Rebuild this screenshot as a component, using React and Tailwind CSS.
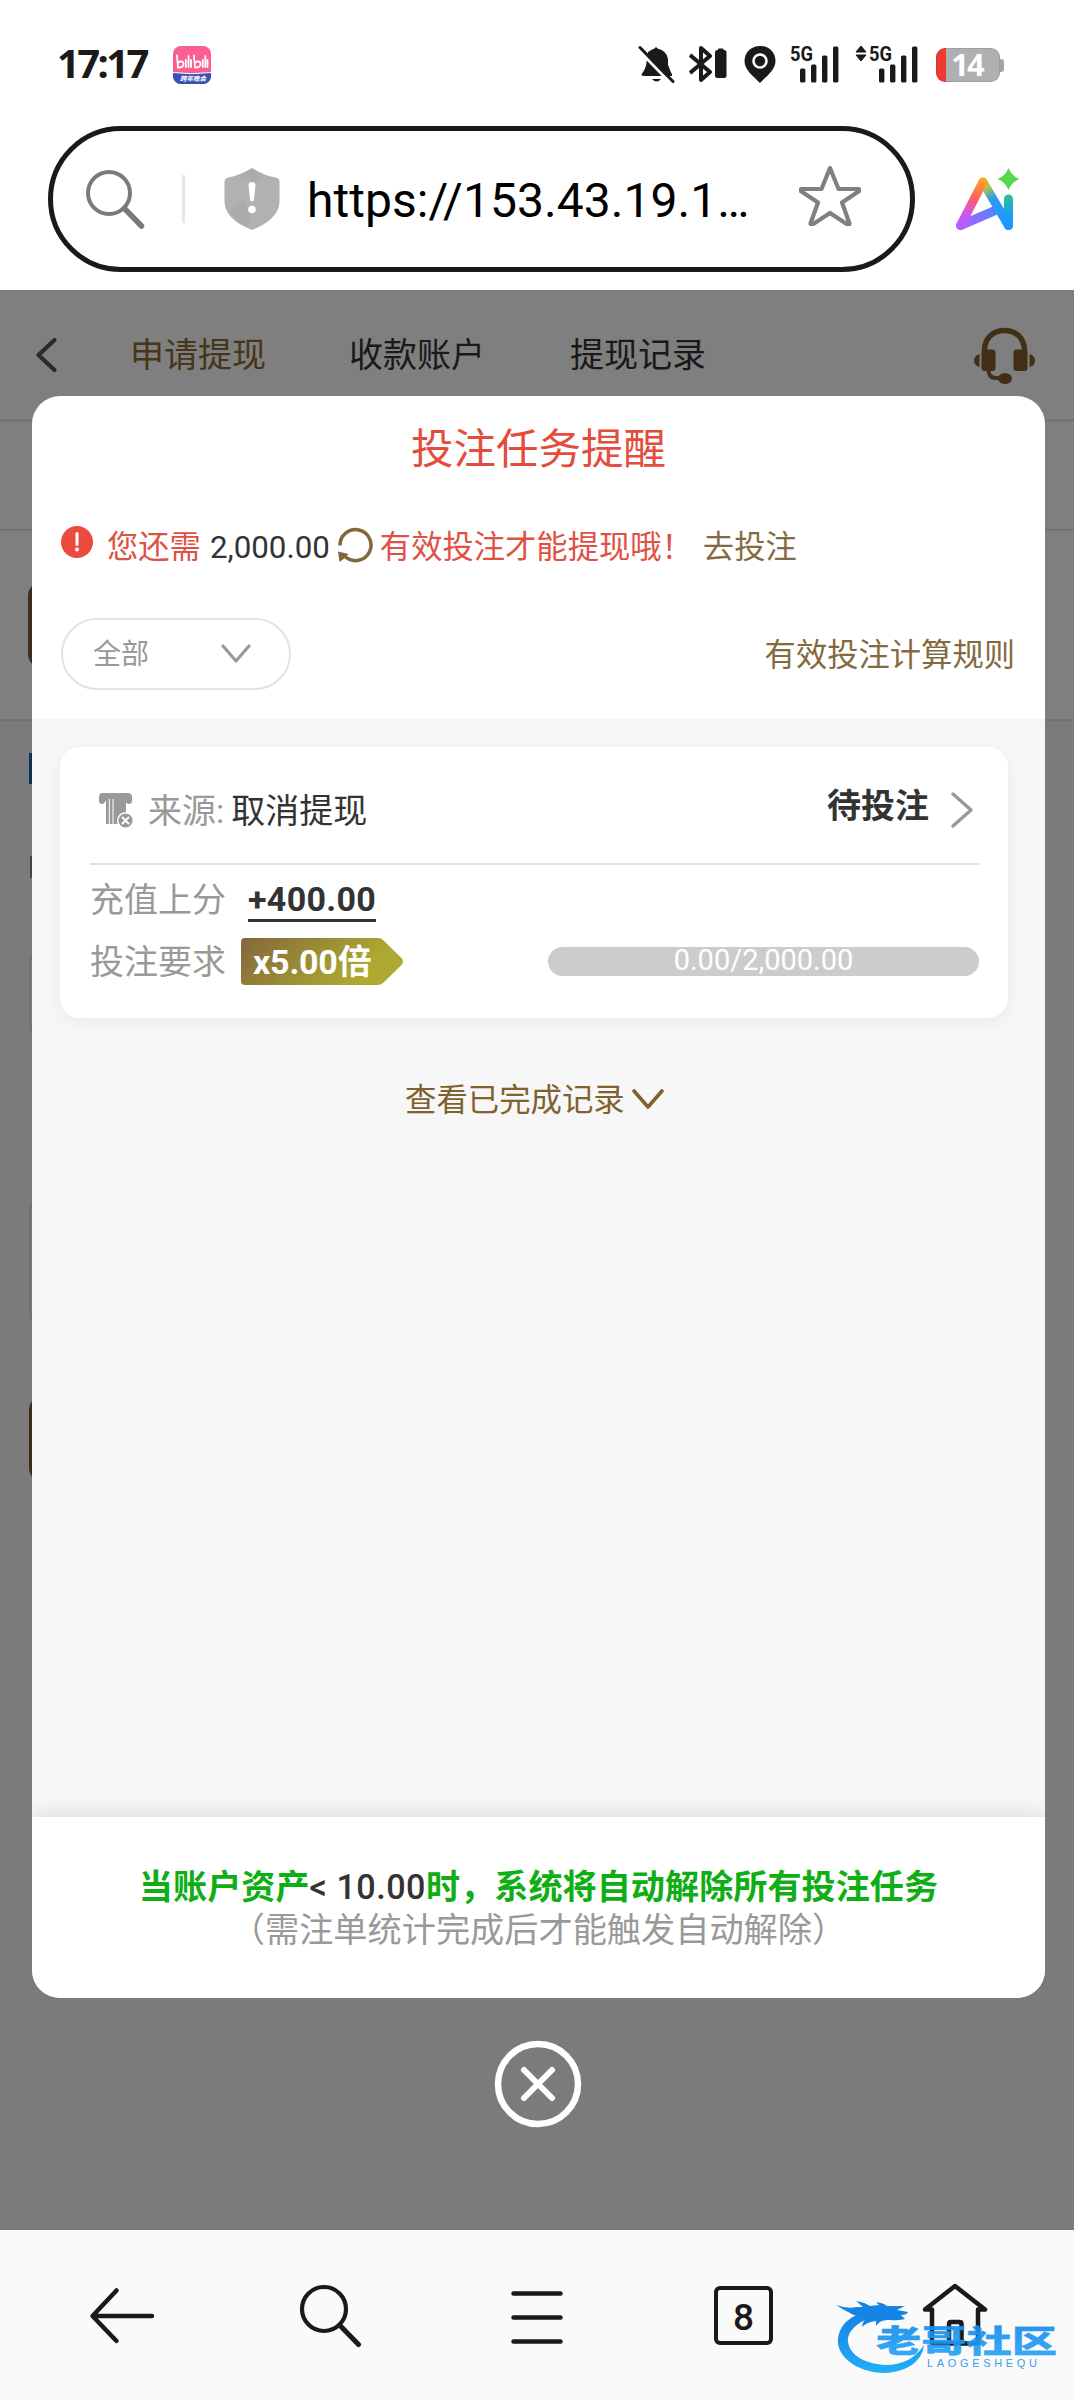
import React from "react";

function Signal({ arrows }) {
  return (
    <svg className="overflow-visible" width={arrows ? 62 : 50} height="38" viewBox={arrows ? "-13 0 62 38" : "0 0 50 38"} fill="#1a1a1a">
      {arrows && <path d="M-8 1l5 6h-10zM-8 16l5-6h-10z" stroke="#1a1a1a" strokeWidth="1" strokeLinejoin="round" />}
      <text x="0" y="16" fontFamily="Roboto, sans-serif" fontWeight="700" fontSize="20.500" textLength="23" lengthAdjust="spacingAndGlyphs">5G</text>
      <rect x="10" y="23.500" width="5.4" height="14" rx="1.5" />
      <rect x="21" y="19.500" width="5.4" height="18" rx="1.5" />
      <rect x="32" y="10.500" width="5.4" height="27" rx="1.5" />
      <rect x="43" y="1.500" width="5.4" height="36" rx="1.5" />
    </svg>
  );
}

function StatusBar() {
  return (
    <div className="flex h-[126px] items-start pl-[57px] pt-[45px]">
      <span className="-mt-[2px] w-[93px] whitespace-nowrap font-['Noto_Sans',sans-serif] text-[40px] font-bold leading-[40px] tracking-[-2.6px] text-[#1a1a1a]">17:17</span>
      <svg className="ml-[23px] mt-px" width="38" height="38" viewBox="0 0 38 38">
        <defs>
          <clipPath id="app"><rect width="38" height="38" rx="8" /></clipPath>
        </defs>
        <g clipPath="url(#app)">
          <rect width="38" height="38" fill="#fb5f92" />
          <path d="M0 26q19 3 38 0v12H0z" fill="#3a50b4" />
          <path d="M0 26.5q19 2.500 38 0" stroke="#fff" strokeWidth="1" fill="none" />
        </g>
        <g stroke="#fff" strokeWidth="1.8" fill="none" strokeLinecap="round">
          <path d="M4 9.500l1 12c4 0 6-1.500 5.500-4s-3-2.500-5-1M21 9.500l1 12c4 0 6-1.500 5.500-4s-3-2.500-5-1" />
          <path d="M12.800 14v7M15.500 10v11M18 14v7M29.800 14v7M32.300 10v11M34.500 14v7" />
        </g>
        <text x="7" y="34.500" fill="#fff" fontFamily="'Noto Sans CJK SC', sans-serif" fontWeight="700" fontStyle="italic" fontSize="6.500">跨年晚会</text>
      </svg>
      <div className="ml-[427px] flex items-start">
        <svg width="38" height="38" viewBox="0 0 38 38" fill="#1a1a1a">
          <path d="M10 7q4-3 6.500-3.500 1.500-2.500 3 0Q29 6 30 14v6l3 7.500q1.500 1 1 3.500H6q-3.500 0-2-2.500 4-5 4.500-11z" />
          <path d="M14 34h9q-4.500 5-9 0z" />
          <path d="M1 5.500l32 33" stroke="#fff" strokeWidth="3" />
          <path d="M2 2.500l33 34" stroke="#1a1a1a" strokeWidth="3" strokeLinecap="round" />
        </svg>
        <svg className="ml-[13px]" width="38" height="38" viewBox="0 0 38 38" fill="none" stroke="#1a1a1a" strokeWidth="4">
          <path d="M1 10l20 17-9 8V3l9 8L1 28" strokeLinejoin="round" />
          <rect x="26" y="5" width="11.500" height="28" rx="2.500" fill="#1a1a1a" stroke="none" />
          <rect x="29" y="3.500" width="5.500" height="3" rx="1" fill="#1a1a1a" stroke="none" />
        </svg>
        <svg className="ml-[17px]" width="32" height="38" viewBox="0 0 32 38">
          <path d="M16 1C7 1 .5 7.500.5 16c0 8.500 8 14.500 15.500 22C23.500 30.500 31.500 24.500 31.500 16 31.500 7.500 25 1 16 1z" fill="#1a1a1a" />
          <circle cx="16" cy="16" r="6.500" fill="#1a1a1a" stroke="#fff" strokeWidth="2.600" />
        </svg>
        <div className="ml-[14px]"><Signal /></div>
        <div className="ml-[16px]"><Signal arrows /></div>
        <div className="ml-[18px] mt-[3px] flex items-center">
          <div className="flex h-[34px] w-[64px] items-center justify-center rounded-[9px] bg-[#b0b0b0] bg-linear-to-r from-[#ee3a31] from-[15%] to-[#b0b0b0] to-[15%] pr-[2px] font-['Noto_Sans',sans-serif] text-[31px] font-bold leading-[32px] tracking-[-2px] text-white ring-1 ring-inset ring-black/10"><span className="-mt-[2px]">14</span></div>
          <div className="h-[13px] w-[4px] rounded-r-[3px] bg-[#a4a4a4]" />
        </div>
      </div>
    </div>
  );
}

function AddressBar() {
  return (
    <div className="flex h-[164px] items-start pl-[48px]">
      <div className="flex h-[146px] w-[867px] items-center rounded-full border-[5px] border-[#1a1a1a] pl-[33px]">
        <svg width="60" height="62" viewBox="0 0 60 62" fill="none" stroke="#7a7a7a" strokeLinecap="round">
          <circle cx="23" cy="25" r="21" strokeWidth="4" />
          <path d="M38.500 40.500L55.500 58" strokeWidth="5.500" />
        </svg>
        <div className="ml-[36px] h-[48px] w-[3px] bg-[#e6e6e6]" />
        <svg className="ml-[39px]" width="56" height="64" viewBox="0 0 56 64">
          <path d="M28 1Q41 9 52 10.500q3.500 1 3.500 4V34C55.500 48 43 57 28 63 13 57 .5 48 .5 34V14.500q0-3 3.500-4Q15 9 28 1z" fill="#b1b1b1" />
          <path d="M28 1q-8 5-14 7 12 3 18 10l6-11Q32 4 28 1zM20 35q-10 0-13 12 5 7 16 13l4-10z" fill="#a6a6a6" opacity=".5" />
          <path d="M24.500 18q0-3 3.500-3t3.500 3l-1.500 15q-2 3-4 0z" fill="#fff" />
          <circle cx="28" cy="42.500" r="3.800" fill="#fff" />
        </svg>
        <span className="ml-[27px] mt-[3px] w-[445px] whitespace-nowrap font-['Roboto',sans-serif] text-[48px] leading-[60px] tracking-[0.05px] text-black">https://153.43.19.1…</span>
        <svg className="-mt-[7px] ml-[47px]" width="62" height="60" viewBox="1 1 62 60" fill="none" stroke="#808080" strokeWidth="4.200" strokeLinejoin="round">
          <path d="M32 3l8.500 21h20.500q1 1.500-.5 2.500L44 37.500l7.500 21q-.5 1.500-2 1L32 48 14.500 59.500q-1.500.5-2-1L20 37.500 3.500 26.500Q2 25.500 3 24h20.500z" />
        </svg>
      </div>
      <svg className="ml-[40px] mt-[41px]" width="66" height="66" viewBox="0 0 66 66" fill="none">
        <defs>
          <linearGradient id="aiA" x1="28" y1="10" x2="6" y2="60" gradientUnits="userSpaceOnUse">
            <stop stopColor="#ffac1c" /><stop offset=".45" stopColor="#ff5b6d" /><stop offset=".75" stopColor="#c957f1" /><stop offset="1" stopColor="#b35fff" />
          </linearGradient>
          <linearGradient id="aiB" x1="27" y1="12" x2="54" y2="60" gradientUnits="userSpaceOnUse">
            <stop stopColor="#ffac1c" /><stop offset=".2" stopColor="#9fc454" /><stop offset=".4" stopColor="#2d9bf0" /><stop offset="1" stopColor="#1e96ff" />
          </linearGradient>
          <linearGradient id="aiC" x1="8" y1="58" x2="42" y2="44" gradientUnits="userSpaceOnUse">
            <stop stopColor="#b65cff" /><stop offset="1" stopColor="#4a86ff" />
          </linearGradient>
          <linearGradient id="aiD" x1="0" y1="30" x2="0" y2="60" gradientUnits="userSpaceOnUse">
            <stop stopColor="#22c39a" /><stop offset=".6" stopColor="#1e9bf5" /><stop offset="1" stopColor="#1e96ff" />
          </linearGradient>
        </defs>
        <g strokeWidth="9" strokeLinecap="round" strokeLinejoin="round">
          <path d="M5.500 58.500L39 44" stroke="url(#aiC)" />
          <path d="M28 15L53.500 58.500" stroke="url(#aiB)" />
          <path d="M53.500 32v26.500" stroke="url(#aiD)" />
          <path d="M5.500 58.500L28 15" stroke="url(#aiA)" />
        </g>
        <path d="M53.500 1q3 8 11 11-8 3-11 11-3-8-11-11 8-3 11-11z" fill="#55d84d" />
      </svg>
    </div>
  );
}

function PageBehind() {
  return (
    <div className="flex h-[1940px] flex-col">
      <div className="flex h-[132px] shrink-0 items-start border-b-[3px] border-[#e4e4e4] bg-white pl-[35px] text-[34px] leading-[44px] text-[#333]">
        <svg className="mt-[47px]" width="23" height="36" viewBox="0 0 23 36" fill="none" stroke="#555" strokeWidth="4.200" strokeLinecap="round" strokeLinejoin="round">
          <path d="M19.500 3L3.500 18l16 15" />
        </svg>
        <span className="ml-[72px] mt-[43px] text-[#8a6a33]">申请提现</span>
        <span className="ml-[83px] mt-[43px]">收款账户</span>
        <span className="ml-[85px] mt-[43px]">提现记录</span>
        <svg className="ml-[267px] mt-[37px]" width="64" height="58" viewBox="0 0 64 58" fill="#84602c">
          <path d="M11.500 24C11.500 10 21 3.500 31.500 3.500S51.500 10 51.500 24" fill="none" stroke="#84602c" strokeWidth="5.500" />
          <rect x="8.500" y="22.500" width="14" height="21.500" rx="3" />
          <rect x="40.500" y="22.500" width="14" height="21.500" rx="3" />
          <path d="M6.500 27v13Q1 38.500 1 33.500T6.500 27zM56.500 27v13q5.500-1.500 5.500-6.500T56.500 27z" />
          <path d="M15.500 43q0 8 8 8h7" fill="none" stroke="#84602c" strokeWidth="4" />
          <ellipse cx="32" cy="51.500" rx="7" ry="5.500" />
        </svg>
      </div>
      <div className="flex h-[109px] shrink-0 items-center border-b-2 border-[#e4e4e4] bg-white pl-[31px] text-[30px] text-[#333]">充值</div>
      <div className="flex h-[190px] shrink-0 items-center border-b-2 border-[#e4e4e4] bg-white pl-[28px]">
        <div className="h-[86px] w-[300px] rounded-[14px] bg-[#755a3a]" />
      </div>
      <div className="flex grow flex-col bg-[#f7f7f7] pl-[29px]">
        <div className="mt-[32px] h-[31px] w-[8px] bg-[#1d5fa8]" />
        <div className="ml-px mt-[72px] h-[22px] w-[40px] border-l-2 border-[#888]" />
        <div className="mt-[71px] h-[90px] w-[600px] rounded-[14px] border-2 border-[#e4e4e4]" />
        <div className="mt-[157px] h-[130px] w-[600px] rounded-[14px] border-2 border-[#e0e0e0]" />
        <div className="mt-[70px] h-[86px] w-[600px] rounded-[14px] bg-[#755a3a]" />
      </div>
    </div>
  );
}

function TaskCard() {
  return (
    <div className="h-[271px] w-[948px] rounded-[20px] bg-white pl-[30px] pr-[29px] text-[34px] text-[#999] shadow-[0_4px_18px_rgba(0,0,0,0.06)]">
      <div className="flex h-[118px] items-center border-b-2 border-[#e1e1e1] pl-[8px] pt-[8px]">
        <svg className="mt-px" width="36" height="36" viewBox="0 0 36 36" fill="#999">
          <path d="M5 1h25q4 0 4 4v4q0 3-3 3t-3-3H7q0 3-3 3T1 9V5q0-4 4-4z" />
          <path d="M8 7h20v17L20 32H8z" />
          <path d="M11.300 7v25M15 7v25" stroke="#fff" strokeWidth="1" />
          <circle cx="27.500" cy="28.500" r="7.800" stroke="#fff" strokeWidth="1.500" />
          <path d="M24.500 25.500l6 6m0-6l-6 6" stroke="#fff" strokeWidth="2" strokeLinecap="round" />
        </svg>
        <span className="ml-[14px] mt-[3px] leading-[44px]">来源:</span>
        <span className="ml-[7px] mt-[3px] leading-[44px] text-[#333]">取消提现</span>
        <span className="-mt-[6px] ml-auto mr-[21px] font-bold leading-[44px] text-[#333]">待投注</span>
        <svg className="mr-[5px] mt-px" width="24" height="38" viewBox="0 0 24 38" fill="none" stroke="#999" strokeWidth="3.400" strokeLinecap="round" strokeLinejoin="round">
          <path d="M3 3l18 16L3 35" />
        </svg>
      </div>
      <div className="flex h-[70px] items-center">
        <span className="leading-[44px]">充值上分</span>
        <span className="ml-[22px] mt-px border-b-[3px] border-[#333] pb-px font-bold leading-[38px] tracking-[0.3px] text-[#333]">+400.00</span>
      </div>
      <div className="flex h-[53px] items-center">
        <span className="leading-[44px]">投注要求</span>
        <div className="relative ml-[15px] flex h-[47px] w-[163px] items-center pl-[12px] leading-[44px]">
          <svg className="absolute inset-0" width="163" height="47" viewBox="0 0 163 47">
            <defs>
              <linearGradient id="tag" x1="0" y1="0" x2="1" y2=".3">
                <stop stopColor="#84673b" /><stop offset=".9" stopColor="#aea932" />
              </linearGradient>
            </defs>
            <path d="M4 0h133q3 0 5 2l18.500 18q3 3.500 0 7l-18.500 18q-2 2-5 2H4q-4 0-4-4V4q0-4 4-4z" fill="url(#tag)" />
          </svg>
          <span className="relative whitespace-nowrap font-bold tracking-[-0.2px] text-white">x5.00倍</span>
        </div>
        <div className="-mt-px ml-auto flex h-[29px] w-[431px] items-center justify-center rounded-full bg-[#ccc] text-[29px] leading-[26px] text-white"><span className="-mt-[2px]">0.00/2,000.00</span></div>
      </div>
    </div>
  );
}

function Dialog() {
  return (
    <section className="flex h-[1602px] w-[1013px] flex-col overflow-hidden rounded-[28px] bg-white">
      <header className="h-[323px] shrink-0">
        <h1 className="h-[104px] pt-[2px] text-center text-[42.500px] leading-[104px] text-[#e34d3d]">投注任务提醒</h1>
        <div className="flex h-[90px] items-center whitespace-nowrap pl-[28px] pt-[5px] text-[31.300px] leading-[44px] text-[#e05043]">
          <svg className="-mt-[12px]" width="34" height="34" viewBox="0 0 34 34">
            <circle cx="17" cy="17" r="16" fill="#ea4b3e" />
            <path d="M17 8.500v11" stroke="#fff" strokeWidth="3" strokeLinecap="round" />
            <circle cx="17" cy="24.500" r="2" fill="#fff" />
          </svg>
          <span className="ml-[13px]">您还需</span>
          <span className="ml-[9px] text-[#333]">2,000.00</span>
          <svg className="-mt-[6px] ml-[7px]" width="36" height="36" viewBox="0 0 36 36">
            <path d="M3 18.500A15.500 15.500 0 1 1 8.500 30" fill="none" stroke="#80683a" strokeWidth="3.500" />
            <path d="M1 24.500l10.500 2.500-3 3.500L2.500 35z" fill="#80683a" />
          </svg>
          <span className="ml-[7px]">有效投注才能提现哦！</span>
          <span className="ml-[10px] text-[#856a3f]">去投注</span>
        </div>
        <div className="mt-[28px] flex h-[72px] items-center justify-between pl-[29px] pr-[30px]">
          <div className="flex h-[72px] w-[230px] items-center justify-between rounded-full border-[2.500px] border-[#e3e3e3] pl-[30px] pr-[37px] text-[28px] leading-[36px] text-[#999]">
            <span className="mt-[2px]">全部</span>
            <svg width="32" height="20" viewBox="0 0 32 20" fill="none" stroke="#999" strokeWidth="3.200" strokeLinecap="round" strokeLinejoin="round">
              <path d="M3 2l13 15L29 2" />
            </svg>
          </div>
          <span className="mt-[3px] text-[31.300px] leading-[44px] text-[#856a3f]">有效投注计算规则</span>
        </div>
      </header>
      <main className="flex grow flex-col bg-[#f7f7f7] pl-[28px] pt-[28px]">
        <TaskCard />
        <div className="ml-[345px] mt-[61px] flex h-[40px] items-center text-[31.400px] leading-[40px] text-[#80622f]">
          <span className="mt-[3px]">查看已完成记录</span>
          <svg className="ml-[6px]" width="34" height="22" viewBox="0 0 34 22" fill="none" stroke="#80622f" strokeWidth="3.600" strokeLinecap="round" strokeLinejoin="round">
            <path d="M3 3l14 16L31 3" />
          </svg>
        </div>
      </main>
      <footer className="h-[181px] shrink-0 bg-white pt-[49px] text-center text-[34px] leading-[43px] shadow-[0_0_22px_rgba(0,0,0,0.14)]">
        <p className="text-[34.150px] font-bold text-[#0fae15]">当账户资产<span className="font-medium tracking-[0.5px] text-[#333]">&lt; 10.00</span>时，系统将自动解除所有投注任务</p>
        <p className="text-[34.200px] text-[#999]">（需注单统计完成后才能触发自动解除）</p>
      </footer>
    </section>
  );
}

function Watermark() {
  return (
    <svg className="absolute left-[834px] top-[66px] overflow-visible" width="226" height="84" viewBox="0 0 226 84">
      <defs>
        <linearGradient id="wm" x1="0" y1="0" x2="0" y2="1">
          <stop stopColor="#1584e4" /><stop offset="1" stopColor="#22aef8" />
        </linearGradient>
        <linearGradient id="wt" x1="0" y1="0" x2="0" y2="1">
          <stop stopColor="#1286ea" /><stop offset="1" stopColor="#27a8f8" />
        </linearGradient>
      </defs>
      <path d="M28 17C12 22 3 33 4 48c3 17 24 29 47 29 21-1 37-11 39-28-8 13-22 20-38 20C32 68 16 60 14 46 13 35 24 26 38 21z" fill="url(#wm)" />
      <path d="M2 9q12 4 20 2l7 0-7-6q8 1 14 5l9-1-3-3q8 1 11 4l18 0-8 4 11 2q-1 3-7 3l4 4q-8 2-15 1-10-1-14 6l0-5q-9 1-14 6 1-6 4-9-10-1-16-5-8-4-14-8z" fill="#1584e4" />
      <g opacity=".92">
        <text x="30" y="56" fontFamily="'Noto Sans CJK SC', sans-serif" fontWeight="900" fontSize="31" fill="url(#wt)" stroke="#1b92ee" strokeWidth=".3" transform="translate(42 0) scale(1.460 1) translate(-30 0)">老哥社区</text>
      </g>
      <text x="93" y="70.500" fontFamily="'Liberation Sans', sans-serif" fontSize="11" fill="#3aa0ea" textLength="110" lengthAdjust="spacing">LAOGESHEQU</text>
    </svg>
  );
}

function BottomNav() {
  return (
    <nav className="relative flex h-[170px] items-start bg-[#fafafa] pl-[89px] pt-[52px]">
      <svg width="68" height="66" viewBox="0 0 68 66" fill="none" stroke="#1a1a1a" strokeWidth="4.500" strokeLinecap="round" strokeLinejoin="round">
        <path d="M27.500 8.500L3.500 34l24 25M4 34h59" />
      </svg>
      <svg className="ml-[142px]" width="64" height="66" viewBox="0 0 64 66" fill="none" stroke="#1a1a1a" strokeLinecap="round">
        <circle cx="25" cy="27" r="22" strokeWidth="4.200" />
        <path d="M42 44.500L59.500 62.500" strokeWidth="5" />
      </svg>
      <svg className="ml-[147px]" width="54" height="66" viewBox="0 0 54 66" stroke="#1a1a1a" strokeWidth="4.500" strokeLinecap="round">
        <path d="M3.500 11.500h47M3.500 35.500h47M3.500 59.500h47" />
      </svg>
      <div className="ml-[150px] mt-[4px] flex h-[59px] w-[59px] items-center justify-center rounded-[6px] border-[4.500px] border-[#1a1a1a] pt-[3px] font-['Roboto',sans-serif] text-[37px] font-medium leading-none text-[#1a1a1a]">8</div>
      <svg className="ml-[148px]" width="68" height="66" viewBox="0 0 68 66" fill="none" stroke="#1a1a1a" strokeWidth="4.500" strokeLinecap="round" strokeLinejoin="round">
        <path d="M11 60V27.500H4L34 4l30 23.500h-7V60q0 1.500-1.500 1.500H12.500Q11 61.500 11 60zM28 60V42q0-2 2-2h8.500q2 0 2 2v18" />
      </svg>
      <Watermark />
    </nav>
  );
}

export default function App() {
  return (
    <div className="flex h-[2400px] w-[1074px] flex-col overflow-hidden bg-white font-['Roboto','Noto_Sans_CJK_SC',sans-serif]">
      <StatusBar />
      <AddressBar />
      <div className="relative h-[1940px] overflow-hidden">
        <PageBehind />
        <div className="absolute inset-0 flex flex-col items-center bg-black/50 pl-[3px] pt-[106px]">
          <Dialog />
          <svg className="-ml-px mt-[42px]" width="88" height="88" viewBox="0 0 88 88" fill="none" stroke="#fff" strokeLinecap="round">
            <circle cx="44" cy="44" r="40" strokeWidth="6.500" />
            <path d="M30 30l28 28M58 30L30 58" strokeWidth="6" />
          </svg>
        </div>
      </div>
      <BottomNav />
    </div>
  );
}
